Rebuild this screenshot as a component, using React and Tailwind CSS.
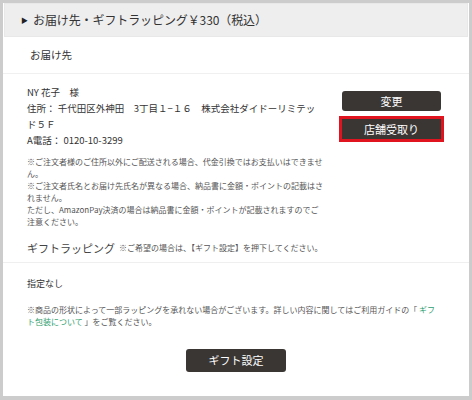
const FONT = { fontFamily: '"Noto Sans CJK JP", "Noto Sans", sans-serif' };

function DarkButton({ children, className = '' }) {
  return (
    <div
      className={`flex items-center justify-center bg-[#3a3634] text-white text-[11px] rounded-[3px] ${className}`}
    >
      {children}
    </div>
  );
}

export default function App() {
  return (
    <div className="w-[472px] h-[400px] bg-[#cccccc] pt-[3px] pl-[3px] pr-[3px] pb-[4px]" style={FONT}>
      <div className="h-full bg-white flex flex-col text-[#333]">
        {/* header */}
        <div className="h-[34px] mx-[1px] bg-[#eeeeee] border border-[#e8e8e8] flex items-center pl-[16px] shrink-0">
          <span className="text-[7px] mr-[5px] text-[#222]">▶</span>
          <span className="text-[12px] tracking-[-0.1px]">お届け先・ギフトラッピング￥330（税込）</span>
        </div>

        <div className="h-[37px] flex items-center pl-[27px] border-b border-[#f0f0f0] shrink-0">
          <span className="text-[10.5px]">お届け先</span>
        </div>

        {/* address + notes */}
        <div className="pt-[10px] pb-[5px] px-[24px] border-b border-[#efefef]">
          <div className="flex">
            <div className="w-[298px]">
              <div className="w-[290px] text-[9.5px] leading-[16px]">
                <p>NY 花子　様</p>
                <p>住所： 千代田区外神田　3丁目１−１６　株式会社ダイドーリミテッド５Ｆ</p>
                <p>A電話： 0120-10-3299</p>
              </div>
              <div className="mt-[8px] text-[8px] leading-[12px] text-[#555]">
                <p>※ご注文者様のご住所以外にご配送される場合、代金引換ではお支払いはできません。</p>
                <p>※ご注文者氏名とお届け先氏名が異なる場合、納品書に金額・ポイントの記載はされません。</p>
                <p>ただし、AmazonPay決済の場合は納品書に金額・ポイントが記載されますのでご注意ください。</p>
              </div>
            </div>
            <div className="ml-[14px] w-[105px] flex flex-col items-center pt-[7px] gap-[5px]">
              <DarkButton className="w-[99px] h-[20px]">変更</DarkButton>
              <div className="w-[105px] h-[26px] border-[3px] border-[#e0141e]">
                <DarkButton className="w-full h-full rounded-none">店舗受取り</DarkButton>
              </div>
            </div>
          </div>
          <div className="mt-[11px] h-[18px] flex items-center">
            <span className="text-[11px] text-[#444]">ギフトラッピング</span>
            <span className="text-[8px] text-[#555] ml-[4px]">※ご希望の場合は、【ギフト設定】を押下してください。</span>
          </div>
        </div>

        {/* gift */}
        <div className="pt-[15px] px-[24px] flex flex-col">
          <p className="text-[9px] leading-[12px]">指定なし</p>
          <div className="mt-[14px] text-[8px] leading-[12px] text-[#555]">
            <p>
              ※商品の形状によって一部ラッピングを承れない場合がございます。詳しい内容に関してはご利用ガイドの「 <span className="text-[#2f9e6e]">ギフ</span>
            </p>
            <p>
              <span className="text-[#2f9e6e]">ト包装について</span> 」をご覧ください。
            </p>
          </div>
          <div className="mt-[21px] flex justify-center">
            <DarkButton className="w-[100px] h-[23px]">ギフト設定</DarkButton>
          </div>
        </div>
      </div>
    </div>
  );
}
